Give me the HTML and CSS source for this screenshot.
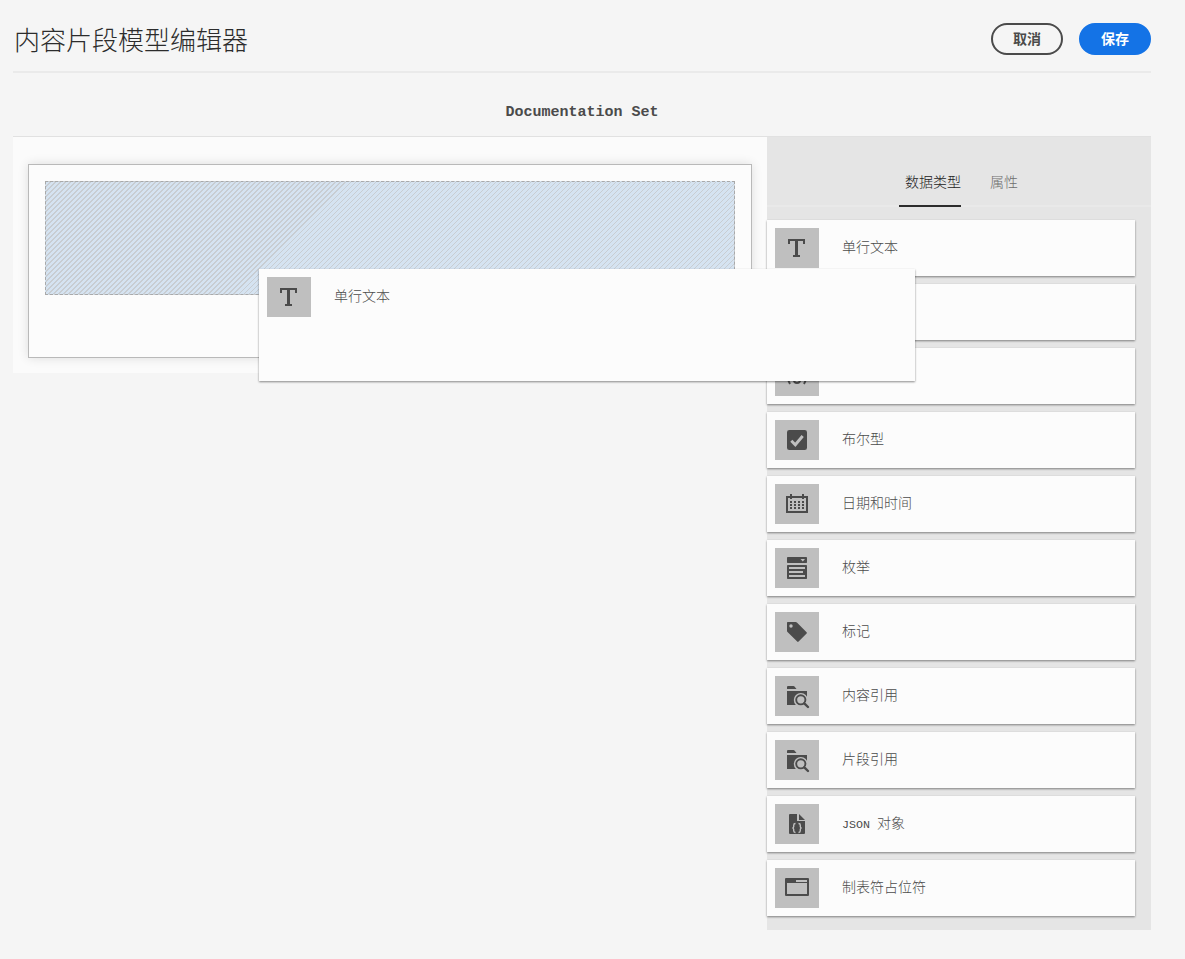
FILE: index.html
```html
<!DOCTYPE html>
<html lang="zh-CN">
<head>
<meta charset="utf-8">
<title>内容片段模型编辑器</title>
<link rel="stylesheet" href="styles.css">
</head>
<body>
<svg class="defs" width="0" height="0">
  <symbol id="i-text" viewBox="0 0 44 40"><path fill="currentColor" d="M13 11h17v5h-2v-3h-5v14h2v2h-7v-2h2V13h-5v3h-2z"/></symbol>
  <symbol id="i-number" viewBox="0 0 44 40"><g fill="none" stroke="currentColor" stroke-width="2"><path d="M15 12q-5 8 0 16M29 12q5 8 0 16"/><circle cx="22" cy="24" r="3"/></g></symbol>
  <symbol id="i-check" viewBox="0 0 44 40"><rect x="12" y="10" width="20" height="20" rx="2.3" fill="currentColor"/><path d="M16.3 20.8l4 4 7.4-8.8" fill="none" stroke="#bfbfbf" stroke-width="2.9"/></symbol>
  <symbol id="i-date" viewBox="0 0 44 40"><path fill="none" stroke="currentColor" stroke-width="2" d="M12 13h20v15H12z"/><path fill="currentColor" d="M15 10h2v5h-2zM27 10h2v5h-2z"/><path fill="none" stroke="currentColor" stroke-width="2" stroke-dasharray="2 2" d="M15 18h14M15 21h14M15 24h14"/></symbol>
  <symbol id="i-enum" viewBox="0 0 44 40"><rect x="12" y="9" width="20" height="6" rx=".7" fill="currentColor"/><rect x="12" y="17" width="20" height="14" rx=".7" fill="currentColor"/><path fill="#bfbfbf" d="M25.5 11h4.5l-2.2 2.6zM14 19h16v2H14zM14 23h14v2H14zM14 27h16v2H14z"/></symbol>
  <symbol id="i-tag" viewBox="0 0 44 40"><path fill="currentColor" d="M12 10.7q0-.7.7-.7h8q.7 0 1.200.5l9.700 9.700q.7.7 0 1.400l-8 8q-.7.7-1.400 0L12.500 20q-.5-.5-.5-1z"/><circle cx="16" cy="14" r="1.700" fill="#bfbfbf"/></symbol>
  <symbol id="i-ref" viewBox="0 0 44 40"><path fill="currentColor" d="M12 11q0-1 1-1h5.500q.6 0 1 .5L21.500 13H12zM12 15h20v14H12z"/><circle cx="25.800" cy="24" r="7" fill="#bfbfbf"/><circle cx="25.800" cy="23.800" r="4.600" fill="none" stroke="currentColor" stroke-width="1.900"/><path stroke="#bfbfbf" stroke-width="4" d="M31 26l3 3"/><path d="M29.300 27.300l3.700 3.700" stroke="currentColor" stroke-width="2.400" stroke-linecap="round"/></symbol>
  <symbol id="i-json" viewBox="0 0 44 40"><path fill="currentColor" d="M14 11q0-1 1-1h7v7h8v12q0 1-1 1H15q-1 0-1-1zM24 10l6 6h-6z"/><path fill="none" stroke="#bfbfbf" stroke-width="1.400" d="M20.500 19.500q-1.800 0-1.800 1.700v1.300q0 1.300-1.200 1.500 1.200.2 1.200 1.500v1.300q0 1.700 1.800 1.700M23.500 19.500q1.800 0 1.800 1.700v1.300q0 1.300 1.200 1.500-1.200.2-1.200 1.500v1.300q0 1.700-1.800 1.700"/></symbol>
  <symbol id="i-tab" viewBox="0 0 44 40"><path fill="currentColor" fill-rule="evenodd" d="M11 10h22q1 0 1 1v16q0 1-1 1H11q-1 0-1-1V11q0-1 1-1zM12 15v11h20V15zM21 12v2h11v-2z"/></symbol>
</svg>
<main class="editor">
  <header class="topbar">
    <h1 class="title">内容片段模型编辑器</h1>
    <div class="actions">
      <button class="btn">取消</button>
      <button class="btn btn-primary">保存</button>
    </div>
  </header>
  <h2 class="model-name">Documentation Set</h2>
  <div class="workspace">
    <section class="canvas">
      <div class="form-box"><div class="dropzone"></div></div>
    </section>
    <aside class="sidebar">
      <nav class="tabs"><a class="tab active">数据类型</a><a class="tab">属性</a></nav>
      <ul class="types">
        <li class="card"><span class="icon"><svg><use href="#i-text"/></svg></span><span class="label">单行文本</span></li>
        <li class="card"></li>
        <li class="card"><span class="icon"><svg><use href="#i-number"/></svg></span></li>
        <li class="card"><span class="icon"><svg><use href="#i-check"/></svg></span><span class="label">布尔型</span></li>
        <li class="card"><span class="icon"><svg><use href="#i-date"/></svg></span><span class="label">日期和时间</span></li>
        <li class="card"><span class="icon"><svg><use href="#i-enum"/></svg></span><span class="label">枚举</span></li>
        <li class="card"><span class="icon"><svg><use href="#i-tag"/></svg></span><span class="label">标记</span></li>
        <li class="card"><span class="icon"><svg><use href="#i-ref"/></svg></span><span class="label">内容引用</span></li>
        <li class="card"><span class="icon"><svg><use href="#i-ref"/></svg></span><span class="label">片段引用</span></li>
        <li class="card"><span class="icon"><svg><use href="#i-json"/></svg></span><span class="label"><span class="latin">JSON </span>对象</span></li>
        <li class="card"><span class="icon"><svg><use href="#i-tab"/></svg></span><span class="label">制表符占位符</span></li>
      </ul>
    </aside>
  </div>
  <div class="card dragged"><span class="icon"><svg><use href="#i-text"/></svg></span><span class="label">单行文本</span></div>
</main>
</body>
</html>
```
FILE: styles.css
```css
* { box-sizing: border-box; }
body {
  margin: 0;
  height: 959px;
  overflow: hidden;
  background: #f5f5f5;
  color: #4b4b4b;
  font-family: "Noto Sans CJK SC", sans-serif;
  font-size: 14px;
}
.defs { position: absolute; }
.editor { position: relative; width: 1151px; padding-left: 13px; }
.topbar {
  display: flex;
  justify-content: space-between;
  height: 73px;
  border-bottom: 2px solid #eaeaea;
}
.title {
  margin: 20px 0 0 1px;
  font-size: 26px;
  font-weight: 300;
  line-height: 38px;
  color: #2c2c2c;
}
.actions { display: flex; gap: 16px; padding-top: 23px; }
.btn {
  width: 72px;
  height: 32px;
  padding: 0 0 3px;
  border: 2px solid #4b4b4b;
  border-radius: 16px;
  background: transparent;
  color: #4b4b4b;
  font: bold 14px/20px "Noto Sans CJK SC", sans-serif;
}
.btn-primary { border-color: #1473e6; background: #1473e6; color: #fff; }
.model-name {
  height: 64px;
  margin: 0;
  padding-top: 30px;
  border-bottom: 1px solid #e1e1e1;
  font: bold 15px/20px "Liberation Mono", monospace;
  text-align: center;
}
.workspace { display: flex; align-items: flex-start; }
.canvas { width: 754px; height: 236px; padding: 27px 15px 15px; background: #fbfbfb; }
.form-box {
  height: 194px;
  padding: 16px;
  border: 1px solid #b9b9b9;
  background: #fcfcfc;
  box-shadow: 0 0 10px rgba(0, 0, 0, .12);
}
.dropzone {
  height: 114px;
  border: 1px dashed #a9a9a9;
  background: repeating-linear-gradient(135deg, #d5e3f1 0 2.8px, #c8cdd2 2.8px 3.536px);
}
.sidebar { width: 384px; height: 793px; background: #e5e5e5; }
.tabs {
  display: flex;
  gap: 29px;
  height: 70px;
  padding: 33px 0 0 132px;
  border-bottom: 2px solid #e9e9e9;
}
.tab { height: 37px; line-height: 22px; font-weight: 300; color: #6e6e6e; }
.tab.active { width: 62px; padding-left: 6px; border-bottom: 2px solid #2c2c2c; color: #222; white-space: nowrap; }
.types {
  display: flex;
  flex-direction: column;
  gap: 8px;
  margin: 0;
  padding: 13px 16px 0 0;
  list-style: none;
}
.card {
  display: flex;
  gap: 23px;
  height: 56px;
  padding: 8px;
  background: #fcfcfc;
  box-shadow: 0 1px 2px rgba(0, 0, 0, .45);
}
.icon { width: 44px; height: 40px; background: #bfbfbf; color: #4b4b4b; }
.icon svg { display: block; width: 44px; height: 40px; }
.label { padding-top: 8px; line-height: 20px; font-weight: 300; white-space: pre; }
.latin { font-family: "Liberation Mono", monospace; font-size: 11.67px; }
.dragged { position: absolute; left: 259px; top: 269px; width: 656px; height: 112px; }
```
